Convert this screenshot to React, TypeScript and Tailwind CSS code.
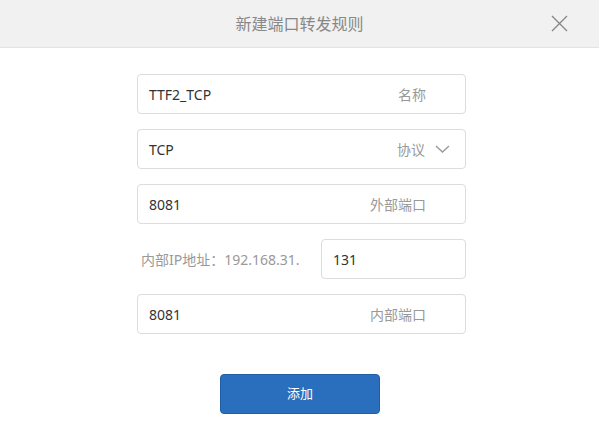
const rows = [
  { value: "TTF2_TCP", label: "名称" },
  { value: "TCP", label: "协议", select: true },
  { value: "8081", label: "外部端口" },
];

function Field({ value, label, select }: { value: string; label: string; select?: boolean }) {
  return (
    <div className="flex h-[40px] items-center rounded-[4px] border border-[#dcdcdc] bg-white pl-[11px] pr-[15px]">
      <span className="flex-1 text-[14px] text-[#333]">{value}</span>
      <span className={"text-[14px] text-[#999] " + (select ? "" : "mr-[24px]")}>{label}</span>
      {select && (
        <svg className="ml-[10px]" width="15" height="8" viewBox="0 0 15 8" fill="none">
          <path d="M1 1l6.5 6 6.5-6" stroke="#999" strokeWidth="1.4" />
        </svg>
      )}
    </div>
  );
}

export default function App() {
  return (
    <div
      className="h-[444px] w-[599px] bg-white"
      style={{ fontFamily: '"Noto Sans", "Noto Sans CJK SC", sans-serif' }}
    >
      <div className="relative flex h-[48px] items-center justify-center border-b border-[#e3e3e3] bg-[#f1f1f1]">
        <span className="text-[16px] text-[#888]">新建端口转发规则</span>
        <button type="button" className="absolute right-[31px] top-[15px]" aria-label="关闭">
          <svg width="17" height="17" viewBox="0 0 17 17" fill="none">
            <path d="M1 1l15 15M16 1L1 16" stroke="#888" strokeWidth="1.4" />
          </svg>
        </button>
      </div>
      <div className="ml-[137px] flex w-[329px] flex-col gap-[15px] pt-[26px]">
        {rows.map((r) => (
          <Field key={r.label} value={r.value} label={r.label} select={r.select} />
        ))}
        <div className="flex h-[40px] items-center">
          <span className="flex-1 pl-[4px] text-[14px] text-[#999]">内部IP地址：192.168.31.</span>
          <div className="flex h-[40px] w-[145px] items-center rounded-[4px] border border-[#dcdcdc] pl-[11px] text-[14px] text-[#333]">
            131
          </div>
        </div>
        <Field value="8081" label="内部端口" />
      </div>
      <div className="mt-[40px] flex justify-center pl-[1px]">
        <button
          type="button"
          className="h-[40px] w-[160px] rounded-[4px] border border-[#1f5fa8] bg-[#2a6fbd] text-[13px] text-white"
        >
          添加
        </button>
      </div>
    </div>
  );
}
